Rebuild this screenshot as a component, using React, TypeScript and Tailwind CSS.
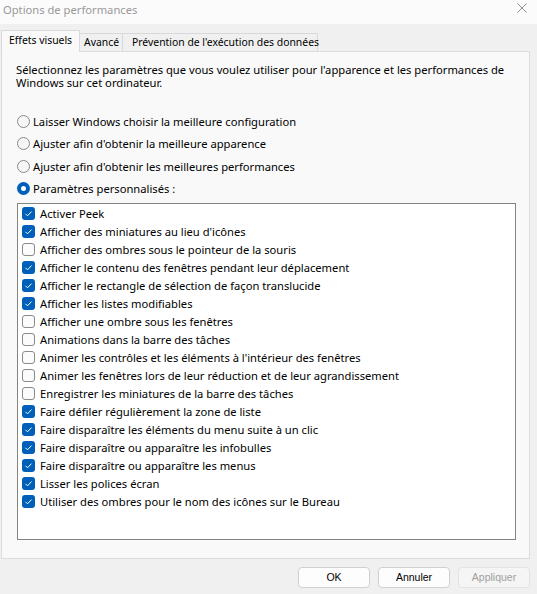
import React from "react";

const items: [string, boolean][] = [
  ["Activer Peek", true],
  ["Afficher des miniatures au lieu d'icônes", true],
  ["Afficher des ombres sous le pointeur de la souris", false],
  ["Afficher le contenu des fenêtres pendant leur déplacement", true],
  ["Afficher le rectangle de sélection de façon translucide", true],
  ["Afficher les listes modifiables", true],
  ["Afficher une ombre sous les fenêtres", false],
  ["Animations dans la barre des tâches", false],
  ["Animer les contrôles et les éléments à l'intérieur des fenêtres", false],
  ["Animer les fenêtres lors de leur réduction et de leur agrandissement", false],
  ["Enregistrer les miniatures de la barre des tâches", false],
  ["Faire défiler régulièrement la zone de liste", true],
  ["Faire disparaître les éléments du menu suite à un clic", true],
  ["Faire disparaître ou apparaître les infobulles", true],
  ["Faire disparaître ou apparaître les menus", true],
  ["Lisser les polices écran", true],
  ["Utiliser des ombres pour le nom des icônes sur le Bureau", true],
];

const radios: [string, boolean][] = [
  ["Laisser Windows choisir la meilleure configuration", false],
  ["Ajuster afin d'obtenir la meilleure apparence", false],
  ["Ajuster afin d'obtenir les meilleures performances", false],
  ["Paramètres personnalisés :", true],
];

function Check({ on }: { on: boolean }) {
  if (on)
    return (
      <div className="w-[13px] h-[13px] rounded-[3px] bg-[#005fb8] flex items-center justify-center shrink-0">
        <svg width="13" height="13" viewBox="0 0 13 13">
          <polyline points="3.5,6.8 5.5,8.8 9.5,4.6" fill="none" stroke="#ffffff" strokeWidth="1" />
        </svg>
      </div>
    );
  return <div className="w-[13px] h-[13px] rounded-[3px] border border-[#8a8a8a] bg-[#fbfbfb] shrink-0" />;
}

function Radio({ on }: { on: boolean }) {
  if (on)
    return (
      <div className="w-[13px] h-[13px] rounded-full bg-[#005fb8] flex items-center justify-center shrink-0">
        <div className="w-[5px] h-[5px] rounded-full bg-white" />
      </div>
    );
  return <div className="w-[13px] h-[13px] rounded-full border border-[#8a8a8a] bg-[#f6f6f6] shrink-0" />;
}

function Btn({ label, disabled }: { label: string; disabled?: boolean }) {
  return (
    <button
      className={
        disabled
          ? "w-[72px] h-[21px] rounded-[4px] border border-[#e3e3e3] bg-[#f5f5f5] text-[#a0a0a0] flex items-center justify-center text-[10.5px]"
          : "w-[72px] h-[21px] rounded-[4px] border border-[#d0d0d0] bg-[#fdfdfd] text-[#000000] flex items-center justify-center text-[10.5px]"
      }
      style={{ fontFamily: '"Liberation Sans", Arial, sans-serif' }}
    >
      {label}
    </button>
  );
}

export default function App() {
  return (
    <div
      className="w-[537px] h-[594px] bg-[#f0f0f0] flex flex-col text-[11.2px] text-[#000000] leading-[13px] overflow-hidden"
      style={{ fontFamily: '"Noto Sans", sans-serif' }}
    >
      <div className="h-[24px] bg-[#fbfbfb] flex items-center justify-between pl-[3px] pr-[10px] shrink-0">
        <span className="text-[#999999] text-[11.2px] -mt-[6px] whitespace-nowrap">Options de performances</span>
        <svg width="10" height="10" viewBox="0 0 10 10" className="-mt-[8px]">
          <path d="M0.5 0.5 L9.5 9.5 M9.5 0.5 L0.5 9.5" stroke="#8c8c8c" strokeWidth="1" />
        </svg>
      </div>
      <div className="h-[27px] flex items-end pl-[1px] shrink-0 text-[10.4px] whitespace-nowrap">
        <div className="h-[22px] w-[79px] pl-[7px] pt-[3px] bg-[#f9f9f9] border border-b-0 border-[#d9d9d9] relative z-10 -mb-px flex items-start">
          Effets visuels
        </div>
        <div className="h-[18px] w-[43px] pl-[4px] bg-[#f0f0f0] border border-l-0 border-b-0 border-[#d9d9d9] flex items-center">
          Avancé
        </div>
        <div className="h-[18px] w-[195px] pl-[9px] bg-[#f0f0f0] border border-l-0 border-b-0 border-[#d9d9d9] flex items-center">
          Prévention de l'exécution des données
        </div>
      </div>
      <div className="ml-[1px] w-[529px] h-[508px] border border-[#dcdcdc] bg-[#f9f9f9] flex flex-col shrink-0">
        <div className="pl-[14px] pt-[11px] pr-[10px]">
          <p className="whitespace-nowrap">
            Sélectionnez les paramètres que vous voulez utiliser pour l'apparence et les performances de
          </p>
          <p>Windows sur cet ordinateur.</p>
        </div>
        <div className="mt-[21px] ml-[15px] flex flex-col">
          {radios.map(([label, on], i) => (
            <div key={i} className={`flex items-center gap-[3px] ${i % 2 === 0 ? "h-[22px]" : "h-[23px]"}`}>
              <Radio on={on} />
              <span>{label}</span>
            </div>
          ))}
        </div>
        <div className="mt-[3px] ml-[15px] w-[499px] h-[337px] border border-[#838383] bg-white flex flex-col">
          {items.map(([label, on], i) => (
            <div key={i} className="h-[18px] flex items-center pl-[4px] gap-[5px] whitespace-nowrap">
              <Check on={on} />
              <span>{label}</span>
            </div>
          ))}
        </div>
      </div>
      <div className="flex justify-end gap-[8px] pr-[7px] pt-[8px]">
        <Btn label="OK" />
        <Btn label="Annuler" />
        <Btn label="Appliquer" disabled />
      </div>
    </div>
  );
}
